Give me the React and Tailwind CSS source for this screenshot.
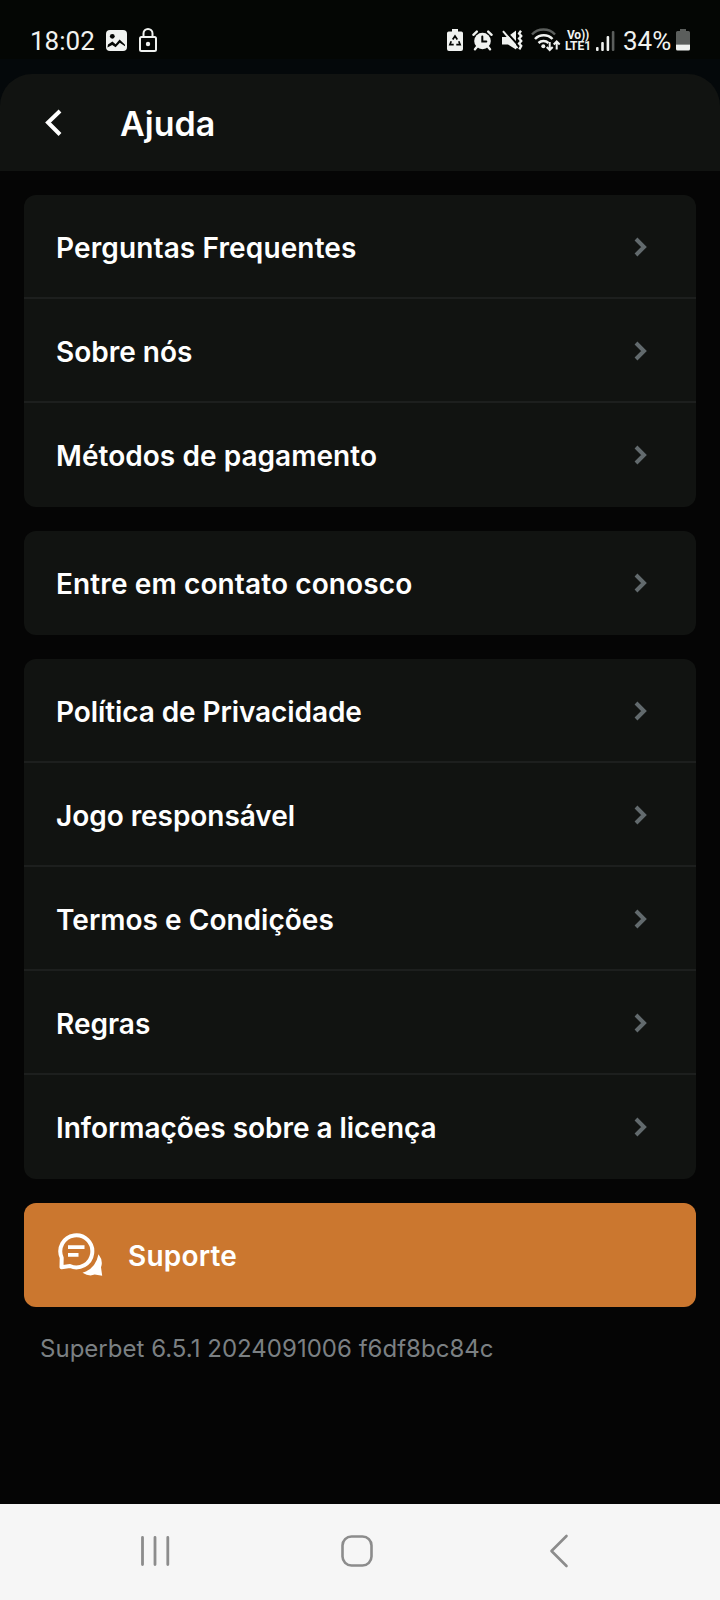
const groups = [
  [
    { label: 'Perguntas Frequentes', spacing: 'tracking-[0.13px]' },
    { label: 'Sobre nós', spacing: 'tracking-normal' },
    { label: 'Métodos de pagamento', spacing: 'tracking-[0.05px]' },
  ],
  [{ label: 'Entre em contato conosco', spacing: 'tracking-[0.12px]' }],
  [
    { label: 'Política de Privacidade', spacing: 'tracking-[-0.09px]' },
    { label: 'Jogo responsável', spacing: 'tracking-[-0.05px]' },
    { label: 'Termos e Condições', spacing: 'tracking-[0.02px]' },
    { label: 'Regras', spacing: 'tracking-normal' },
    { label: 'Informações sobre a licença', spacing: 'tracking-[-0.04px]' },
  ],
];

function StatusBar() {
  return (
    <div className="h-[59px] pt-[22px] bg-[#040604] flex items-center text-[#f0f2f0] font-['Roboto',sans-serif]">
      <span className="w-[66px] ml-[30px] text-[26px] leading-none whitespace-nowrap">18:02</span>

      {/* image */}
      <svg className="ml-[10px] mb-px shrink-0" width="21" height="21" viewBox="0 0 21 21">
        <rect width="21" height="21" rx="4" fill="currentColor" />
        <circle cx="6.3" cy="6.3" r="2.4" fill="#040604" />
        <path d="M2 14.6l4.4-3 3.2 2.6 4-4.8 5.4 5.4v1.500l-5.200-3.600-4.200 4.600-3.400-2.400-4.800 2.600z" fill="#040604" />
      </svg>

      {/* lock */}
      <svg className="ml-[12px] mb-px shrink-0" width="18" height="24" viewBox="0 0 18 24" fill="none" stroke="currentColor" strokeWidth="2">
        <rect x="1" y="9" width="16" height="14" rx="1.500" />
        <path d="M4.500 9V5.500a4.500 4.500 0 0 1 9 0V9" />
        <circle cx="9" cy="16" r="2.200" fill="currentColor" stroke="none" />
      </svg>

      {/* battery saver */}
      <svg className="ml-auto mb-px shrink-0" width="16" height="22" viewBox="0 0 16 22">
        <path d="M5 0h6v2.500h3.300q1.700 0 1.700 1.700v15.800q0 2-2 2H2q-2 0-2-2V4.200q0-1.700 1.700-1.700H5z" fill="currentColor" />
        <path d="M5.700 10.400L8 7l2.300 3.400M11.800 12.200l1.300 3.400H9.300M6.700 15.600H2.900L4.200 12.200" fill="none" stroke="#040604" strokeWidth="1.700" />
      </svg>

      {/* alarm */}
      <svg className="ml-[9px] mb-px shrink-0" width="21" height="21" viewBox="0 0 21 21" fill="none" stroke="currentColor" strokeLinecap="round">
        <circle cx="10.500" cy="11" r="8.300" fill="currentColor" stroke="none" />
        <path d="M1.400 4.800l3.400-3.200M19.600 4.800l-3.400-3.200M4.800 17l-1.800 2.200M16.200 17l1.800 2.200" strokeWidth="2.400" />
        <path d="M10.300 6.500v5h4" stroke="#040604" strokeWidth="2" />
      </svg>

      {/* vibrate, sound off */}
      <svg className="ml-[9px] mb-px shrink-0" width="21" height="21" viewBox="0 0 21 21">
        <path d="M0 7h5.500L14 .5v19L6 14.500H0z" fill="currentColor" />
        <path d="M3 .8l12 13" stroke="#040604" strokeWidth="2" />
        <path d="M1 1.200l14.500 17" stroke="currentColor" strokeWidth="2" />
        <path d="M19 .8l-1.900 2.600 2.100 2.500-2.100 2.500 2.100 2.500-2.100 2.500 2.100 2.500-1.900 3.400" fill="none" stroke="currentColor" strokeWidth="2.400" />
      </svg>

      {/* wifi */}
      <svg className="ml-[8px] mb-px shrink-0" width="30" height="24" viewBox="0 0 30 24" fill="none" stroke="currentColor" strokeWidth="2.500">
        <path d="M1 6.500a16 16 0 0 1 23 0" stroke="#5b5e5c" />
        <path d="M4 11a12 12 0 0 1 17.500 0M7.500 15a7.300 7.300 0 0 1 10 0" />
        <circle cx="12.300" cy="18.300" r="2" fill="currentColor" stroke="none" />
        <path d="M18.700 14v8M15.700 19l3 3 3-3M25.700 21.500v-8M22.700 16.500l3-3 3 3" strokeWidth="2" />
      </svg>

      <div className="ml-[3px] mt-px w-[28px] shrink-0 flex flex-col items-center text-[12px] leading-[11px] font-bold whitespace-nowrap">
        <span className="tracking-[-0.2px]">Vo))</span>
        <span>LTE1</span>
      </div>

      {/* signal */}
      <svg className="ml-[4px] shrink-0" width="19" height="20" viewBox="0 0 19 20" fill="currentColor">
        <rect y="16" width="2.600" height="4" rx="1" />
        <rect x="5.200" y="11" width="2.600" height="9" rx="1" />
        <rect x="10.600" y="5" width="2.600" height="15" rx="1" />
        <rect x="15.800" width="2.600" height="20" rx="1" fill="#5b5e5c" />
      </svg>

      <span className="ml-[8px] w-[50px] text-[26px] leading-none whitespace-nowrap">34%</span>

      {/* battery */}
      <svg className="ml-[3px] mr-[30px] mb-px shrink-0" width="14" height="22" viewBox="0 0 14 22">
        <path d="M4 0h6v2h2.500q1.500 0 1.500 1.500V15.500H0V3.500Q0 2 1.500 2H4z" fill="#5b5e5c" />
        <path d="M0 15.500h14V20q0 1.500-1.500 1.500h-11Q0 21.500 0 20z" fill="currentColor" />
      </svg>
    </div>
  );
}

function Header() {
  return (
    <header className="bg-[#04080a] pt-[15px]">
      <div className="h-[97px] rounded-t-[32px] bg-[#111311] flex items-center">
        <svg className="ml-[43px]" width="20" height="28" viewBox="0 0 20 28" fill="none" stroke="#fff" strokeWidth="4">
          <path d="M17 2L5 13.500 17 25.500" />
        </svg>
        <h1 className="ml-[57px] mt-[2px] text-[34px] leading-none font-semibold text-white">Ajuda</h1>
      </div>
    </header>
  );
}

function Row({ label, spacing }) {
  return (
    <li className="h-[104px] pl-8 pr-[48px] flex items-center justify-between border-b-2 pt-[2px] border-[#1d1f1e] last:border-b-0 last:pt-0">
      <span className={`text-[28px] leading-none font-semibold text-white pt-[2px] ${spacing}`}>{label}</span>
      <svg width="14" height="20" viewBox="0 0 14 20" fill="none" stroke="#626a6d" strokeWidth="4">
        <path d="M2 2l8 8-8 8" />
      </svg>
    </li>
  );
}

function SupportButton() {
  return (
    <button className="h-[104px] pl-[34px] rounded-xl bg-[#cb772f] flex items-center text-white">
      <svg width="45" height="44" viewBox="0 0 45 44">
        <path d="M3.500 34.300l.2-9.500A16 16 0 1 1 12 33z" fill="none" stroke="#fff" strokeWidth="4" strokeLinejoin="round" />
        <path d="M10 12.300h16.500v3.800H10zM10 20h10.500v3.800H10z" fill="#fff" />
        <path d="M40.500 21.300q5 6.500 2.500 13l1.200 8.500-7.500-1.200Q31 43.800 24.500 39.800 37.500 36.300 40.500 21.300z" fill="#fff" />
      </svg>
      <span className="ml-[25px] pt-[2px] text-[28px] tracking-[0.2px] leading-none font-semibold">Suporte</span>
    </button>
  );
}

function NavBar() {
  return (
    <nav className="h-24 bg-[#f6f6f6] flex items-center pb-[2px]">
      <svg className="ml-[139px]" width="32" height="32" viewBox="0 0 32 32" stroke="#8c8c8c" strokeWidth="2.800" strokeLinecap="round">
        <path d="M3.500 2.400v27.200M16 2.400v27.200M28.800 2.400v27.200" />
      </svg>
      <svg className="ml-[170px]" width="32" height="32" viewBox="0 0 32 32" fill="none" stroke="#8c8c8c" strokeWidth="2.600">
        <rect x="1.500" y="1.500" width="29" height="29" rx="9" />
      </svg>
      <svg className="ml-[176px]" width="21" height="34" viewBox="0 0 21 34" fill="none" stroke="#8c8c8c" strokeWidth="2.600" strokeLinecap="round" strokeLinejoin="round">
        <path d="M17.500 2L2.500 17l15 15" />
      </svg>
    </nav>
  );
}

export default function App() {
  return (
    <div className="w-[720px] h-[1600px] overflow-hidden flex flex-col bg-[#050505] font-['Inter',sans-serif]">
      <StatusBar />
      <Header />
      <main className="flex-1 px-6 pt-6 flex flex-col gap-6">
        {groups.map((items) => (
          <ul key={items[0].label} className="rounded-xl bg-[#111311]">
            {items.map((item) => (
              <Row key={item.label} {...item} />
            ))}
          </ul>
        ))}
        <SupportButton />
        <p className="pl-4 text-[24px] leading-[36px] tracking-[0.02px] text-[#7b8083]">
          Superbet 6.5.1 2024091006 f6df8bc84c
        </p>
      </main>
      <NavBar />
    </div>
  );
}
